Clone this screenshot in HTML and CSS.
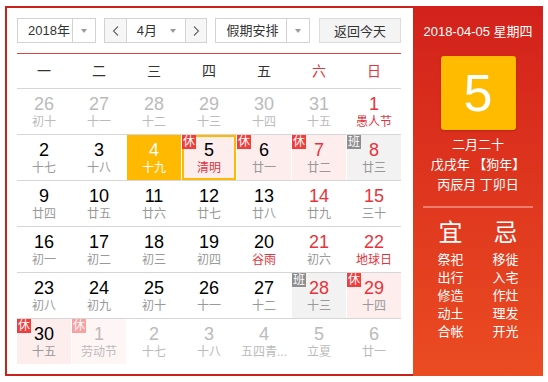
FILE: index.html
```html
<!DOCTYPE html>
<html lang="zh-CN">
<head>
    <meta charset="UTF-8">
    <title>万年历</title>
    <link rel="stylesheet" href="styles.css">
</head>
<body>
    <div class="calendar">
        <div class="cal-main">
            <div class="toolbar">
                <div class="select select-year">
                    <span class="select-text">2018年</span>
                    <span class="select-arrow"><i class="caret"></i></span>
                </div>
                <div class="month-group">
                    <button class="nav-btn nav-prev">
                        <svg width="7" height="10" viewBox="0 0 7 10"><polyline points="6,0.5 1.5,5 6,9.5" fill="none" stroke="#666" stroke-width="1.1"/></svg>
                    </button>
                    <div class="select-month">
                        <span class="select-text">4月</span>
                        <i class="caret"></i>
                    </div>
                    <button class="nav-btn nav-next">
                        <svg width="7" height="10" viewBox="0 0 7 10"><polyline points="1,0.5 5.5,5 1,9.5" fill="none" stroke="#666" stroke-width="1.1"/></svg>
                    </button>
                </div>
                <div class="select select-holiday">
                    <span class="select-text">假期安排</span>
                    <span class="select-arrow"><i class="caret"></i></span>
                </div>
                <button class="today-btn">返回今天</button>
            </div>

            <div class="weekdays">
                <span>一</span><span>二</span><span>三</span><span>四</span><span>五</span>
                <span class="weekend">六</span><span class="weekend">日</span>
            </div>

            <div class="days">
                <div class="week">
                    <div class="day other"><span class="num">26</span><span class="lunar">初十</span></div>
                    <div class="day other"><span class="num">27</span><span class="lunar">十一</span></div>
                    <div class="day other"><span class="num">28</span><span class="lunar">十二</span></div>
                    <div class="day other"><span class="num">29</span><span class="lunar">十三</span></div>
                    <div class="day other"><span class="num">30</span><span class="lunar">十四</span></div>
                    <div class="day other"><span class="num">31</span><span class="lunar">十五</span></div>
                    <div class="day weekend festival"><span class="num">1</span><span class="lunar">愚人节</span></div>
                </div>
                <div class="week">
                    <div class="day"><span class="num">2</span><span class="lunar">十七</span></div>
                    <div class="day"><span class="num">3</span><span class="lunar">十八</span></div>
                    <div class="day today"><span class="num">4</span><span class="lunar">十九</span></div>
                    <div class="day rest selected festival"><span class="badge">休</span><span class="num">5</span><span class="lunar">清明</span></div>
                    <div class="day rest"><span class="badge">休</span><span class="num">6</span><span class="lunar">廿一</span></div>
                    <div class="day rest weekend"><span class="badge">休</span><span class="num">7</span><span class="lunar">廿二</span></div>
                    <div class="day work weekend"><span class="badge">班</span><span class="num">8</span><span class="lunar">廿三</span></div>
                </div>
                <div class="week">
                    <div class="day"><span class="num">9</span><span class="lunar">廿四</span></div>
                    <div class="day"><span class="num">10</span><span class="lunar">廿五</span></div>
                    <div class="day"><span class="num">11</span><span class="lunar">廿六</span></div>
                    <div class="day"><span class="num">12</span><span class="lunar">廿七</span></div>
                    <div class="day"><span class="num">13</span><span class="lunar">廿八</span></div>
                    <div class="day weekend"><span class="num">14</span><span class="lunar">廿九</span></div>
                    <div class="day weekend"><span class="num">15</span><span class="lunar">三十</span></div>
                </div>
                <div class="week">
                    <div class="day"><span class="num">16</span><span class="lunar">初一</span></div>
                    <div class="day"><span class="num">17</span><span class="lunar">初二</span></div>
                    <div class="day"><span class="num">18</span><span class="lunar">初三</span></div>
                    <div class="day"><span class="num">19</span><span class="lunar">初四</span></div>
                    <div class="day festival"><span class="num">20</span><span class="lunar">谷雨</span></div>
                    <div class="day weekend"><span class="num">21</span><span class="lunar">初六</span></div>
                    <div class="day weekend festival"><span class="num">22</span><span class="lunar">地球日</span></div>
                </div>
                <div class="week">
                    <div class="day"><span class="num">23</span><span class="lunar">初八</span></div>
                    <div class="day"><span class="num">24</span><span class="lunar">初九</span></div>
                    <div class="day"><span class="num">25</span><span class="lunar">初十</span></div>
                    <div class="day"><span class="num">26</span><span class="lunar">十一</span></div>
                    <div class="day"><span class="num">27</span><span class="lunar">十二</span></div>
                    <div class="day work weekend"><span class="badge">班</span><span class="num">28</span><span class="lunar">十三</span></div>
                    <div class="day rest weekend"><span class="badge">休</span><span class="num">29</span><span class="lunar">十四</span></div>
                </div>
                <div class="week">
                    <div class="day rest"><span class="badge">休</span><span class="num">30</span><span class="lunar">十五</span></div>
                    <div class="day rest other"><span class="badge">休</span><span class="num">1</span><span class="lunar">劳动节</span></div>
                    <div class="day other"><span class="num">2</span><span class="lunar">十七</span></div>
                    <div class="day other"><span class="num">3</span><span class="lunar">十八</span></div>
                    <div class="day other"><span class="num">4</span><span class="lunar">五四青...</span></div>
                    <div class="day other"><span class="num">5</span><span class="lunar">立夏</span></div>
                    <div class="day other"><span class="num">6</span><span class="lunar">廿一</span></div>
                </div>
            </div>
        </div>

        <div class="cal-side">
            <div class="side-date">2018-04-05 星期四</div>
            <div class="side-day">5</div>
            <div class="side-lunar">
                <p>二月二十</p>
                <p>戊戌年 【狗年】</p>
                <p>丙辰月 丁卯日</p>
            </div>
            <div class="side-line"></div>
            <div class="yiji">
                <div class="yiji-col">
                    <h3>宜</h3>
                    <ul>
                        <li>祭祀</li>
                        <li>出行</li>
                        <li>修造</li>
                        <li>动土</li>
                        <li>合帐</li>
                    </ul>
                </div>
                <div class="yiji-col">
                    <h3>忌</h3>
                    <ul>
                        <li>移徙</li>
                        <li>入宅</li>
                        <li>作灶</li>
                        <li>理发</li>
                        <li>开光</li>
                    </ul>
                </div>
            </div>
        </div>
    </div>
</body>
</html>
```

FILE: styles.css
```css
* {
    box-sizing: border-box;
}

body {
    margin: 0;
    background: #fff;
    font-family: "Liberation Sans", Arial, "Noto Sans CJK SC", sans-serif;
    color: #333;
}

.calendar {
    display: flex;
    width: 538px;
    height: 370px;
    margin: 6px 0 0 5px;
    border: 2px solid #c9221d;
    border-right: none;
}

/* left part */
.cal-main {
    width: 406px;
    padding: 10px 12px 10px 10px;
}

.toolbar {
    display: flex;
    height: 25px;
    font-size: 13px;
}

.select {
    display: flex;
    height: 25px;
    border: 1px solid #d2d2d2;
    background: #fff;
    margin-right: 8px;
}

.select-text {
    line-height: 23px;
    padding-left: 10px;
    color: #333;
}

.select-year {
    width: 79px;
}

.select-year .select-text {
    width: 54px;
}

.select-holiday {
    width: 95px;
    margin-right: 9px;
}

.select-holiday .select-text {
    width: 70px;
}

.select-arrow {
    flex: 1;
    display: flex;
    align-items: center;
    justify-content: center;
    border-left: 1px solid #d2d2d2;
}

.caret {
    display: block;
    width: 0;
    height: 0;
    border-left: 3.5px solid transparent;
    border-right: 3.5px solid transparent;
    border-top: 4px solid #9a9a9a;
}

.month-group {
    display: flex;
    width: 104px;
    height: 25px;
    border: 1px solid #d2d2d2;
    margin-right: 8px;
}

.nav-btn {
    display: flex;
    align-items: center;
    justify-content: center;
    padding: 0;
    border: none;
    background: #f6f6f6;
    cursor: pointer;
}

.nav-prev {
    width: 22px;
    border-right: 1px solid #d2d2d2;
}

.nav-next {
    width: 21px;
    border-left: 1px solid #d2d2d2;
}

.select-month {
    flex: 1;
    display: flex;
    align-items: center;
    padding-right: 9px;
}

.select-month .caret {
    margin-left: auto;
}

.today-btn {
    width: 82px;
    height: 25px;
    padding: 0;
    border: 1px solid #dcdcdc;
    background: #f4f4f4;
    font-family: inherit;
    font-size: 13px;
    color: #333;
    cursor: pointer;
}

.weekdays {
    display: grid;
    grid-template-columns: repeat(7, 54px);
    column-gap: 1px;
    height: 36px;
    margin-top: 10px;
    border-top: 1px solid #dd4540;
    border-bottom: 1px solid #d6d6d6;
    line-height: 34px;
    text-align: center;
    font-size: 14px;
    color: #333;
}

.weekdays .weekend {
    color: #e8333b;
}

.week {
    display: grid;
    grid-template-columns: repeat(7, 54px);
    column-gap: 1px;
    border-bottom: 1px solid #d6d6d6;
}

.week:last-child {
    border-bottom: none;
}

.day {
    position: relative;
    height: 45px;
    text-align: center;
}

.num {
    display: block;
    padding-top: 5px;
    font-size: 18px;
    line-height: 20px;
    color: #000;
}

.lunar {
    display: block;
    font-size: 12px;
    line-height: 16px;
    color: #999;
    white-space: nowrap;
}

.day.weekend .num {
    color: #e8333b;
}

.day.festival .lunar {
    color: #de3540;
}

.day.rest {
    background: #fdeded;
}

.day.work {
    background: #f2f2f2;
}

.badge {
    position: absolute;
    top: 0;
    left: 0;
    width: 14px;
    height: 14px;
    font-size: 12px;
    line-height: 14px;
    color: #fff;
    background: #f23d3d;
}

.day.work .badge {
    background: #8e8e8e;
}

.day.other .num,
.day.other .lunar {
    color: #bbb;
}

.day.rest.other {
    background: #fef5f5;
}

.day.other .badge {
    opacity: 0.45;
}

.day.today {
    background: #ffb900;
}

.day.today .num,
.day.today .lunar {
    color: #fff;
}

.day.selected {
    box-shadow: inset 0 0 0 2px #ffb900;
}

/* right panel */
.cal-side {
    width: 130px;
    margin: -2px 0;
    padding-top: 16px;
    background: linear-gradient(to bottom, #d2211b, #eb4c22);
    color: #fff;
    text-align: center;
}

.side-date {
    font-size: 13px;
    line-height: 20px;
}

.side-day {
    width: 75px;
    height: 74px;
    margin: 14px auto 0;
    background: #ffbb00;
    border-radius: 3px;
    font-size: 52px;
    line-height: 74px;
    box-shadow: 0 1px 2px rgba(120, 0, 0, 0.3);
}

.side-lunar {
    margin-top: 5px;
    font-size: 13px;
    line-height: 20px;
}

.side-lunar p {
    margin: 0;
}

.side-line {
    height: 2px;
    margin: 11px 10px 0;
    background: rgba(255, 255, 255, 0.35);
}

.yiji {
    display: flex;
    padding: 0 10px;
    margin-top: 11px;
}

.yiji-col {
    flex: 1;
}

.yiji-col h3 {
    margin: 0;
    font-size: 24px;
    line-height: 28px;
    font-weight: normal;
}

.yiji-col ul {
    list-style: none;
    margin: 4px 0 0;
    padding: 0;
    font-size: 13px;
    line-height: 18px;
}
```
